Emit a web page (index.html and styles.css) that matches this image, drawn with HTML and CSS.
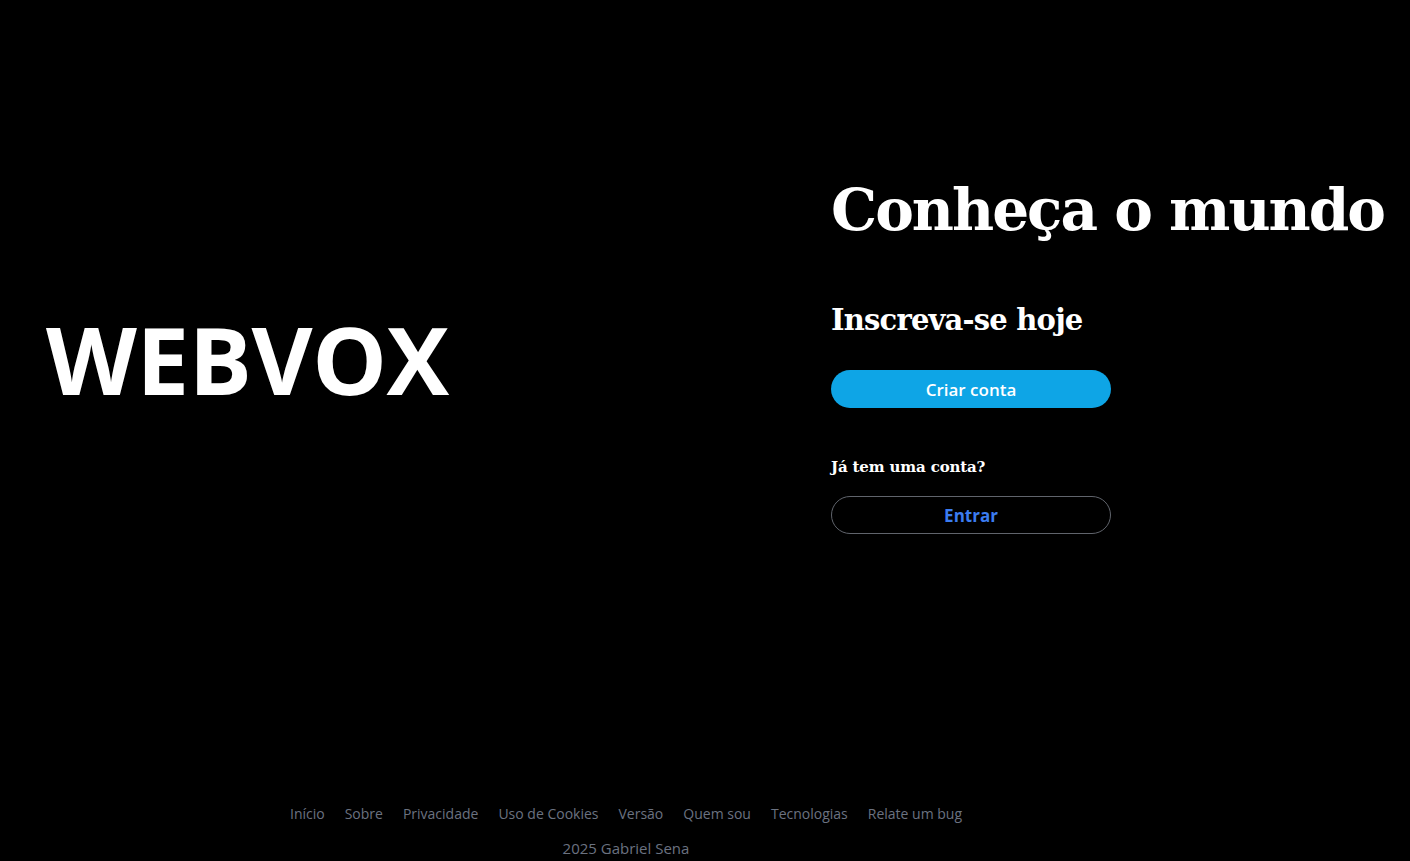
FILE: index.html
```html
<!DOCTYPE html>
<html lang="pt-BR">
<head>
<meta charset="utf-8">
<title>WebVox</title>
<link rel="stylesheet" href="styles.css">
</head>
<body>
<main class="main">
  <section class="brand">
    <h1 class="logo">WEBVOX</h1>
  </section>
  <section class="auth">
    <h1 class="title">Conheça o mundo</h1>
    <h2 class="subtitle">Inscreva-se hoje</h2>
    <button class="btn btn-primary">Criar conta</button>
    <p class="question">Já tem uma conta?</p>
    <button class="btn btn-outline">Entrar</button>
  </section>
</main>
<footer class="footer">
  <nav class="links">
    <a href="#">Início</a>
    <a href="#">Sobre</a>
    <a href="#">Privacidade</a>
    <a href="#">Uso de Cookies</a>
    <a href="#">Versão</a>
    <a href="#">Quem sou</a>
    <a href="#">Tecnologias</a>
    <a href="#">Relate um bug</a>
  </nav>
  <p class="copy">2025 Gabriel Sena</p>
</footer>
</body>
</html>
```
FILE: styles.css
```css
* { box-sizing: border-box; }
html, body { margin: 0; padding: 0; }
body {
  background: #000;
  color: #fff;
  font-family: "Open Sans", "Noto Sans", sans-serif;
  width: 1410px;
  height: 861px;
  overflow: hidden;
}
.main {
  display: grid;
  grid-template-columns: 705px 705px;
  height: 799px;
  align-items: start;
}
.brand {
  padding-left: 46px;
  padding-top: 299px;
}
.logo {
  margin: 0;
  font-family: "Open Sans", sans-serif;
  font-weight: 700;
  font-size: 94px;
  line-height: 120px;
  letter-spacing: -0.4px;
}
.auth {
  padding-left: 126px;
  padding-top: 170px;
  display: flex;
  flex-direction: column;
  align-items: flex-start;
}
.title {
  margin: 0;
  font-family: "DejaVu Serif", Georgia, serif;
  font-weight: 700;
  font-size: 58px;
  line-height: 80px;
  letter-spacing: -2px;
}
.subtitle {
  margin: 50px 0 0;
  font-family: "DejaVu Serif", Georgia, serif;
  font-weight: 700;
  font-size: 29px;
  line-height: 40px;
  letter-spacing: -0.8px;
}
.btn {
  width: 280px;
  height: 38px;
  border-radius: 19px;
  font-family: "Open Sans", sans-serif;
  font-weight: 600;
  font-size: 17px;
  cursor: pointer;
  padding: 0;
}
.btn-primary {
  margin-top: 30px;
  background: #0ea5e6;
  color: #fff;
  border: none;
}
.question {
  margin: 48px 0 0;
  font-family: "DejaVu Serif", Georgia, serif;
  font-weight: 700;
  font-size: 15px;
  line-height: 22px;
  letter-spacing: -0.15px;
}
.btn-outline {
  margin-top: 18px;
  background: transparent;
  color: #3b7cf0;
  border: 1px solid #60646c;
  font-weight: 700;
}
.footer {
  display: flex;
  flex-direction: column;
  align-items: center;
  width: 1252px;
}
.links {
  display: flex;
  gap: 20px;
  height: 28px;
  align-items: center;
}
.links a {
  color: #6b7280;
  text-decoration: none;
  font-size: 14px;
}
.copy {
  margin: 10px 0 0;
  color: #6b7280;
  font-size: 15px;
  line-height: 22px;
}
```
